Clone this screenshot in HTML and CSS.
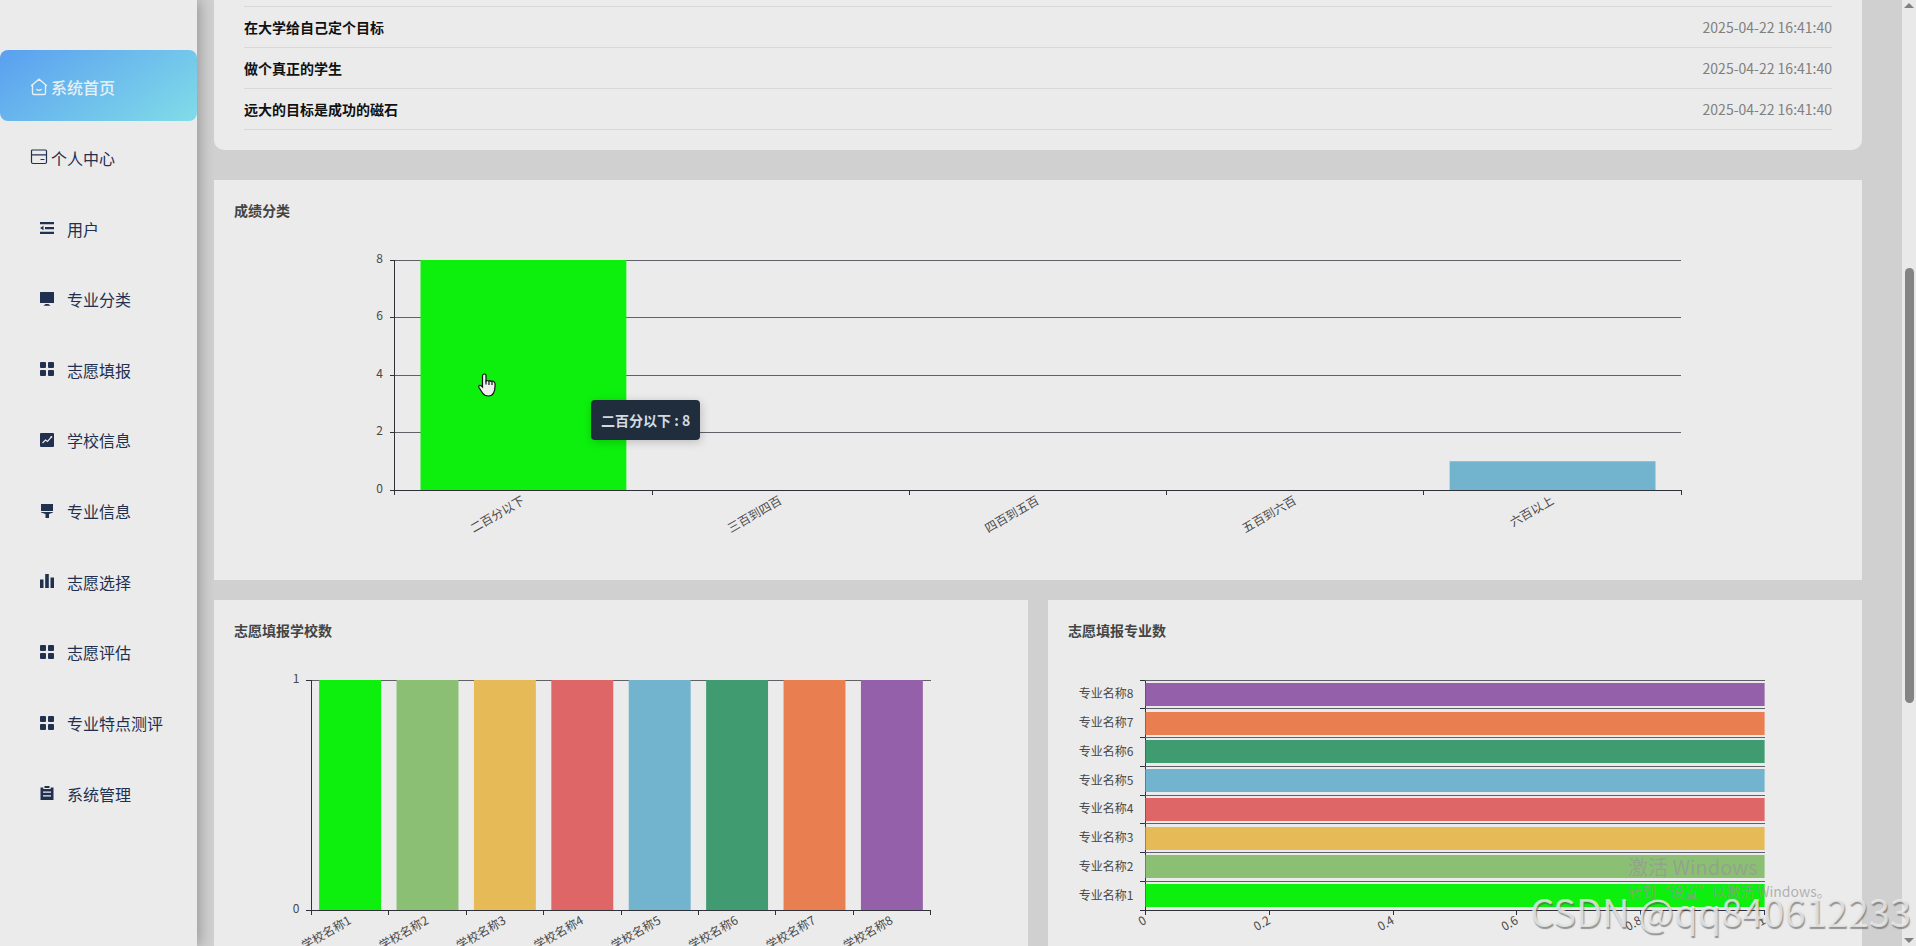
FILE: index.html
```html
<!DOCTYPE html>
<html lang="zh-CN">
<head>
<meta charset="utf-8">
<title>系统首页</title>
<link rel="stylesheet" href="styles.css">
</head>
<body>
<svg class="sprite" aria-hidden="true">
  <symbol id="i-home" viewBox="0 0 18 18"><path d="M1.5 7.500 9 1.200l7.500 6.300M2.500 6.800V15q0 1.500 1.500 1.500h10q1.500 0 1.500-1.500V6.800M6.800 11.500q2.200 1.600 4.400 0" fill="none" stroke="currentColor" stroke-width="1.400" stroke-linecap="round"/></symbol>
  <symbol id="i-card" viewBox="0 0 18 18"><path d="M2.500 2h13q1 0 1 1v11q0 1.500-1.500 1.500H3q-1.500 0-1.500-1.500V3q0-1 1-1zM1.500 6.800h15M11 11.500h3" fill="none" stroke="currentColor" stroke-width="1.200" stroke-linecap="round"/></symbol>
  <symbol id="i-list" viewBox="0 0 14 14"><path d="M0 1h14v2.200H0zM5 6h9v2.200H5zM0 10.800h14V13H0zM0 7l3.500-2.300v4.600z" fill="currentColor"/></symbol>
  <symbol id="i-screen" viewBox="0 0 14 14"><path d="M.5 0h13q.5 0 .5.500V11H0V.5Q0 0 .5 0zM5.500 12h3l2 1.800h-7z" fill="currentColor"/></symbol>
  <symbol id="i-grid" viewBox="0 0 14 14"><g fill="currentColor"><rect width="6" height="6" rx="1"/><rect x="8" width="6" height="6" rx="1"/><rect y="8" width="6" height="6" rx="1"/><rect x="8" y="8" width="6" height="6" rx="1"/></g></symbol>
  <symbol id="i-trend" viewBox="0 0 14 14"><rect width="14" height="14" rx="1" fill="currentColor"/><path d="m2.500 10 3-3 2 1.500 3.800-4.300" fill="none" stroke="#ebebeb" stroke-width="1.200"/><circle cx="11.300" cy="4" r="1" fill="#ebebeb"/></symbol>
  <symbol id="i-brush" viewBox="0 0 14 14"><path d="M1 0h12v7H1zM1 8h12v.5L9 10v4H5.500v-4L1 8.500z" fill="currentColor"/></symbol>
  <symbol id="i-bars" viewBox="0 0 14 14"><path d="M0 5.500h3.500V14H0zM5.200 0h3.600v14H5.200zM10.500 3.500H14V14h-3.500z" fill="currentColor"/></symbol>
  <symbol id="i-board" viewBox="0 0 14 14"><path d="M.5 1.500h2.800V3h7.400V1.500h2.800V14H.5zM4.500 0h5v2h-5z" fill="currentColor"/><path d="M3 6.200h8M3 9.800h8" stroke="#ebebeb" stroke-width="1.200"/></symbol>
</svg>
<div class="app">
  <nav class="sidebar">
    <ul class="menu">
      <li><a class="item item-top active" href="#"><svg class="icon-top"><use href="#i-home"/></svg>系统首页</a></li>
      <li><a class="item item-top" href="#"><svg class="icon-top"><use href="#i-card"/></svg>个人中心</a></li>
      <li><a class="item" href="#"><svg class="icon"><use href="#i-list"/></svg>用户</a></li>
      <li><a class="item" href="#"><svg class="icon"><use href="#i-screen"/></svg>专业分类</a></li>
      <li><a class="item" href="#"><svg class="icon"><use href="#i-grid"/></svg>志愿填报</a></li>
      <li><a class="item" href="#"><svg class="icon"><use href="#i-trend"/></svg>学校信息</a></li>
      <li><a class="item" href="#"><svg class="icon"><use href="#i-brush"/></svg>专业信息</a></li>
      <li><a class="item" href="#"><svg class="icon"><use href="#i-bars"/></svg>志愿选择</a></li>
      <li><a class="item" href="#"><svg class="icon"><use href="#i-grid"/></svg>志愿评估</a></li>
      <li><a class="item" href="#"><svg class="icon"><use href="#i-grid"/></svg>专业特点测评</a></li>
      <li><a class="item" href="#"><svg class="icon"><use href="#i-board"/></svg>系统管理</a></li>
    </ul>
  </nav>
  <main class="content">
    <section class="card news">
      <ul class="news-list">
        <li><a href="#">在大学给自己定个目标</a><time>2025-04-22 16:41:40</time></li>
        <li><a href="#">做个真正的学生</a><time>2025-04-22 16:41:40</time></li>
        <li><a href="#">远大的目标是成功的磁石</a><time>2025-04-22 16:41:40</time></li>
      </ul>
    </section>
    <div class="charts">
      <section class="card chart wide">
        <h2>成绩分类</h2>
        <svg class="plot" id="score"></svg>
        <div class="tooltip">二百分以下 : 8</div>
        <svg class="cursor" viewBox="0 0 18 24"><path d="M6.500 1q1.500 0 1.500 1.500V8q1-1 2.500 0 1.500-.8 2.500.4 2-.6 3.500.9.800 1 .5 4.200 0 4-1.500 6.500-1.500 3-5 3-4 0-6-3L1 14.500q-.8-1.500.5-2 1.300-.4 3 1.500V2.500Q5 1 6.500 1z" fill="#f0f0f0" stroke="#111" stroke-width="1.200"/><path d="M8 7.500v4M11 8v4M14 9v3" stroke="#111" stroke-width="1.200"/></svg>
      </section>
      <section class="card chart">
        <h2>志愿填报学校数</h2>
        <svg class="plot" id="school"></svg>
      </section>
      <section class="card chart">
        <h2>志愿填报专业数</h2>
        <svg class="plot" id="major"></svg>
      </section>
    </div>
  </main>
  <div class="scrollbar" aria-hidden="true">
    <span class="arrow up"></span>
    <span class="track"><span class="thumb"></span></span>
    <span class="arrow down"></span>
  </div>
</div>
<div class="activate"><p class="activate-title">激活 Windows</p><p>转到“设置”以激活 Windows。</p></div>
<div class="watermark">CSDN @qq840612233</div>
<script src="charts.js"></script>
</body>
</html>
```
FILE: styles.css
```css
* { box-sizing: border-box; }
html, body { height: 100%; }
body { margin: 0; overflow: hidden; position: relative; background: #d0d0d0; color: #333; font: 14px/20px "Noto Sans CJK SC", sans-serif; }
ul, h2, p { margin: 0; padding: 0; list-style: none; }
a { color: inherit; text-decoration: none; }
.sprite { display: none; }

.app { display: flex; height: 100%; overflow: hidden; }
.sidebar { flex: none; width: 197px; padding-top: 50px; background: #ebebeb; box-shadow: 2px 0 14px rgba(0, 0, 0, .3); z-index: 1; }
.menu { display: grid; grid-auto-rows: 1fr; min-height: 777px; }
.menu li { display: grid; }
.item { display: flex; align-items: center; gap: 13px; padding: 4px 0 0 40px; color: #223050; font-size: 16px; line-height: 24px; }
.item-top { gap: 3px; padding-left: 30px; }
.active { border-radius: 8px; background: linear-gradient(145deg, #5a9ff0, #80dce8); color: #e6eff6; font-weight: 500; }
.icon { width: 14px; height: 14px; margin-bottom: 1px; }
.icon-top { width: 18px; height: 18px; margin-bottom: 1px; }

.content { flex: 1; min-width: 0; padding: 0 40px 0 17px; }
.card { background: #ebebeb; }
.news { padding: 6px 30px 20px; border-radius: 0 0 10px 10px; }
.news-list { border-top: 1px solid #d8d8d8; }
.news li { display: flex; justify-content: space-between; padding: 10px 0; border-bottom: 1px solid #d8d8d8; }
.news a { color: #111; font-weight: 700; }
.news time { color: #808080; }

.charts { display: grid; grid-template-columns: 1fr 1fr; gap: 20px; padding-top: 30px; }
.chart { position: relative; height: 400px; padding: 20px; }
.wide { grid-column: 1 / -1; }
.chart h2 { color: #444; font-size: 14px; font-weight: 700; line-height: 20px; }
.plot { display: block; width: 100%; height: 340px; overflow: visible; }
.plot text { fill: #484848; font-size: 12px; }
.plot line { stroke: #303038; stroke-width: 1px; shape-rendering: crispEdges; }
.plot .split { stroke: #606066; }

.tooltip { position: absolute; left: 377px; top: 220px; padding: 10px; border-radius: 4px; background: #1f2d3d; box-shadow: 1px 2px 10px rgba(0, 0, 0, .2); color: #d4dae0; font-weight: 700; white-space: nowrap; }
.cursor { position: absolute; left: 264px; top: 193px; width: 18px; height: 24px; }

.scrollbar { flex: none; width: 14px; display: flex; flex-direction: column; align-items: center; justify-content: space-between; padding: 3px 0; background: #e9e9e9; }
.arrow { border: 5px solid transparent; }
.up { border-top: 0; border-bottom-color: #808080; }
.down { border-bottom: 0; border-top-color: #808080; }
.track { flex: 1; width: 9px; padding: 260px 0 235px; }
.thumb { display: block; height: 100%; border-radius: 5px; background: #848484; }

.activate { position: absolute; right: 88px; bottom: 43px; width: 200px; color: rgba(150, 150, 150, .7); font-size: 14px; line-height: 24px; white-space: nowrap; }
.activate-title { font-size: 20px; }
.watermark { position: absolute; right: 5px; bottom: 7px; color: rgba(232, 232, 232, .85); font-size: 38px; line-height: 56px; text-shadow: 1px 2px 1px rgba(90, 90, 90, .6); white-space: nowrap; }
```
FILE: charts.js
```js
const COLORS = ['#0df00d', '#8bc074', '#e6bb57', '#de6666', '#72b3ce', '#409c70', '#e97f50', '#9460a9'];
const PLOT_HEIGHT = 230;
const line = (x1, y1, x2, y2, cls = '') => `<line class="${cls}" x1="${x1}" y1="${y1}" x2="${x2}" y2="${y2}"/>`;
const at = (x, y, body) => `<svg x="${x}%" y="${y}" width="1" height="1" overflow="visible">${body}</svg>`;
const tilted = (x, label) => at(x, PLOT_HEIGHT, `<text transform="translate(2 13) rotate(-30)" text-anchor="end">${label}</text>`);
const tickX = x => at(x, PLOT_HEIGHT, line(0, 0, 0, 5));
const draw = (id, body) => {
  document.getElementById(id).innerHTML =
    `<svg x="10%" y="40" width="80%" height="${PLOT_HEIGHT}" overflow="visible">${body}</svg>`;
};

function columns(id, names, values, max, step) {
  const band = 100 / names.length;
  let out = '';
  for (let v = 0; v <= max; v += step) {
    const y = Math.floor(PLOT_HEIGHT * (1 - v / max));
    out += line(0, y, '100%', y, 'split') + line(-5, y, 0, y)
      + `<text x="-12" y="${y + 3}" text-anchor="end">${v}</text>`;
  }
  names.forEach((name, i) => {
    const h = PLOT_HEIGHT * values[i] / max;
    out += `<rect x="${band * (i + .1)}%" y="${PLOT_HEIGHT - h}" width="${band * .8}%" height="${h}" fill="${COLORS[i]}"/>`;
    out += tickX(band * i) + tilted(band * (i + .5), name);
  });
  draw(id, out + tickX(100) + line(0, 0, 0, PLOT_HEIGHT) + line(0, PLOT_HEIGHT, '100%', PLOT_HEIGHT));
}

function rows(id, names, ticks) {
  const band = PLOT_HEIGHT / names.length;
  let out = line(0, 0, 0, PLOT_HEIGHT);
  names.forEach((name, i) => {
    const y = PLOT_HEIGHT - band * (i + 1);
    out += line(0, y, '100%', y, 'split') + line(-5, y, 0, y);
    out += `<rect x="0" y="${Math.round(y + band * .1)}" width="100%" height="${band * .8}" fill="${COLORS[i]}"/>`;
    out += `<text x="-12" y="${Math.round(y + band / 2 + 4)}" text-anchor="end">${name}</text>`;
  });
  ticks.forEach(t => { out += tickX(t * 100) + tilted(t * 100, t); });
  draw(id, out + line(-5, PLOT_HEIGHT, '100%', PLOT_HEIGHT));
}

const numbered = prefix => COLORS.map((_, i) => prefix + (i + 1));
columns('score', ['二百分以下', '三百到四百', '四百到五百', '五百到六百', '六百以上'], [8, 0, 0, 0, 1], 8, 2);
columns('school', numbered('学校名称'), Array(8).fill(1), 1, 1);
rows('major', numbered('专业名称'), [0, 0.2, 0.4, 0.6, 0.8, 1]);
```
